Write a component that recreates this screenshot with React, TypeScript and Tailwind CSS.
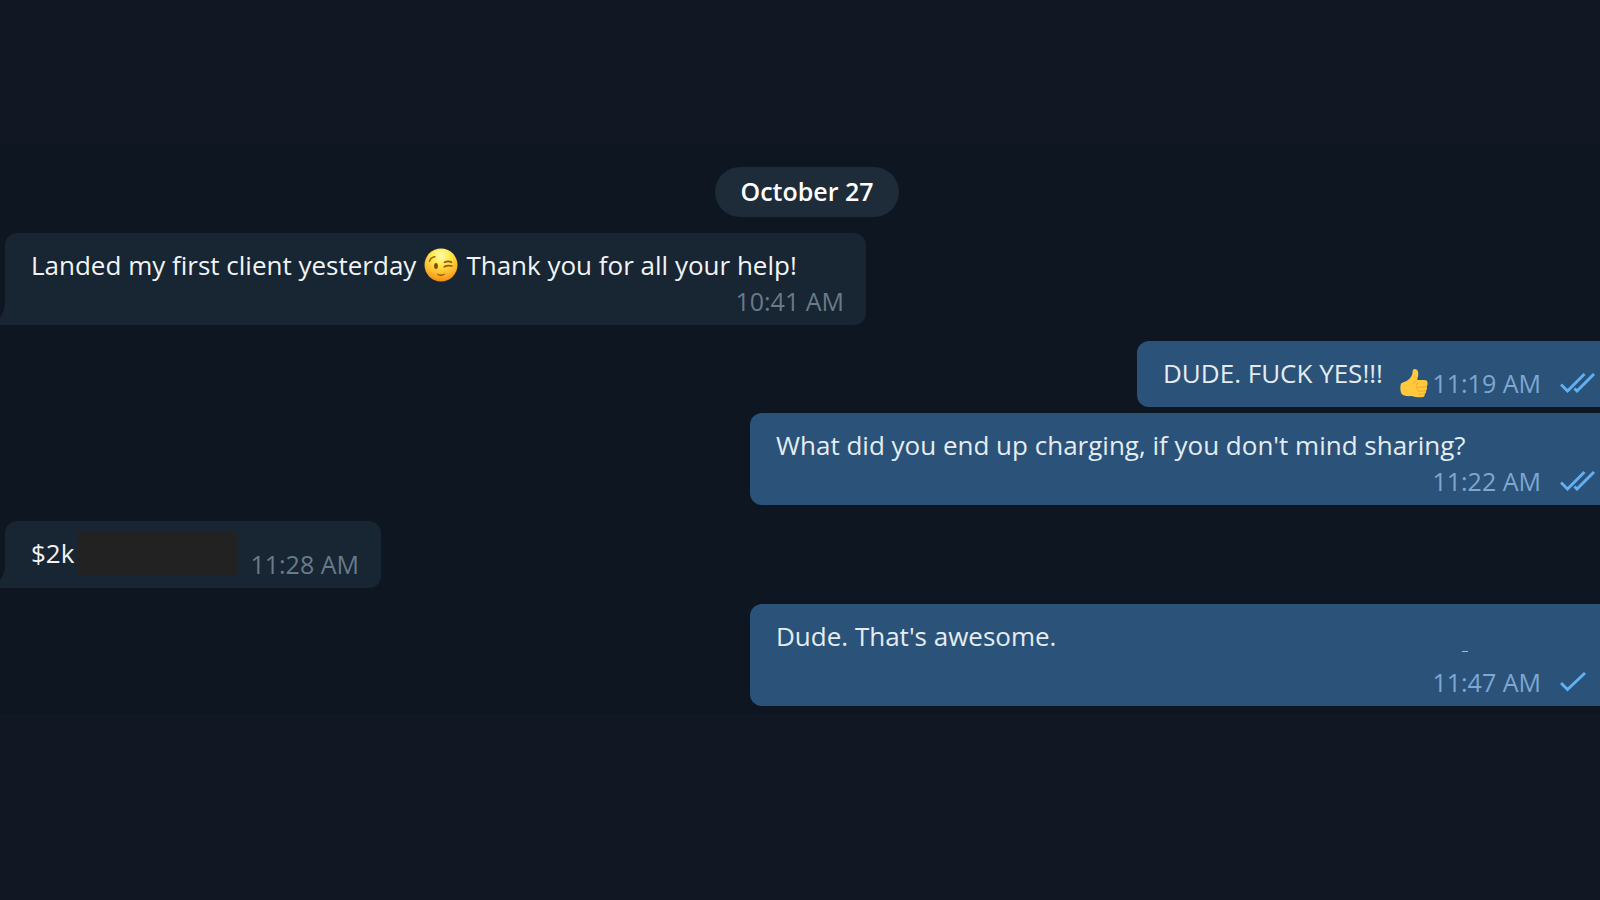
import type { ReactNode } from "react";

const WinkEmoji = () => (
  <svg
    role="img"
    aria-label="winking face"
    viewBox="0 0 34 34"
    className="mx-2 h-[34px] w-[34px] shrink-0"
  >
    <defs>
      <radialGradient id="wink-face" cx="0.5" cy="0.22" r="0.8">
        <stop offset="0" stopColor="#fffbb0" />
        <stop offset="0.35" stopColor="#ffe94a" />
        <stop offset="0.72" stopColor="#fdb62a" />
        <stop offset="1" stopColor="#f08a10" />
      </radialGradient>
    </defs>
    <circle cx="17" cy="17" r="16.5" fill="url(#wink-face)" />
    <path
      d="M5.500 13.200c.8-2.600 2.800-4.200 5.500-4.500"
      fill="none"
      stroke="#a3620f"
      strokeWidth="1.500"
      strokeLinecap="round"
    />
    <ellipse cx="12" cy="18" rx="1.900" ry="2.900" fill="#84480c" />
    <path
      d="M20.500 14.300c2.500-1.200 5-1.200 7 0M20.300 18.800c2.400-1.300 4.800-1.400 7.500-.8"
      fill="none"
      stroke="#94560d"
      strokeWidth="1.600"
      strokeLinecap="round"
    />
    <path d="M12.500 25.500c3 1.200 6 1.200 9 0-1 3.300-8 3.300-9 0z" fill="#94560d" />
  </svg>
);

const ThumbEmoji = () => (
  <svg
    role="img"
    aria-label="thumbs up"
    viewBox="0 0 28 30"
    className="mr-1 h-[30px] w-[28px] shrink-0"
  >
    <path
      d="M1 15.500C3.500 14 6 13.500 8 12c2.500-2 4.300-4.500 4.500-7.500C12.600 2.500 13 1 14.800 1c2.700.2 3.700 2.800 3.500 5.500-.1 2-.8 3.700-1.300 5.500h7c2.500 0 3.700 1.300 3.500 3 .3 1.500-.1 2.700-.8 3.500.6 1.500.3 3-.6 4 .3 1.500-.2 2.800-1.300 3.500.1 2-1 3.300-3.300 3.300-3.500.2-7-.3-10-1.300-3.500.3-7 .2-9.300-1.500C0 24 0 18.500 1 15.500z"
      fill="#ffc83d"
    />
    <path
      d="M17 12c-1.200 1-2.700 1.500-4 3.500M25.800 18.500c-2 .8-5 .9-8 .6M25.800 22.500c-2 .7-4.500.8-7.500.5M24.600 26c-1.700.5-3.500.5-5.500.2M17.500 15.500c-1.500 2.500-1 5.500.5 7.500"
      fill="none"
      stroke="#f5aa2e"
      strokeWidth="1"
      strokeLinecap="round"
    />
  </svg>
);

const Ticks = ({ read }: { read: boolean }) => (
  <svg
    role="img"
    aria-label={read ? "Read" : "Sent"}
    viewBox="0 0 36 20"
    className="h-5 w-9 shrink-0"
    fill="none"
    stroke="#62b0f4"
    strokeWidth="2.900"
  >
    {read ? (
      <>
        <path d="M1 11.500l6.500 6.500L24.500 1" />
        <path d="M14.500 15.500l2.500 2.500L34 1" />
      </>
    ) : (
      <path d="M1 11l6.500 6.500L25 1" />
    )}
  </svg>
);

const Tail = () => (
  <svg
    aria-hidden="true"
    viewBox="0 0 5 24"
    className="absolute right-full bottom-0 h-6 w-[5px]"
  >
    <path d="M5 0c0 6-1.500 12-5 16v8h5z" fill="#182533" />
  </svg>
);

const Incoming = ({ className, children }: { className: string; children: ReactNode }) => (
  <li
    className={`relative ml-[5px] max-w-full self-start rounded-xl rounded-bl-none bg-[#182533] pt-[14px] pr-[22px] pb-[6px] pl-[26px] ${className}`}
  >
    {children}
    <Tail />
  </li>
);

const Outgoing = ({ className, children }: { className: string; children: ReactNode }) => (
  <li
    className={`max-w-full self-end rounded-l-xl bg-[#2b5278] pt-[14px] pr-1 pb-[6px] pl-[26px] text-[#e4ecf2] ${className}`}
  >
    {children}
  </li>
);

const Status = ({ time, read }: { time: string; read: boolean }) => (
  <div className="flex items-center justify-end text-[25px] text-[#7da8d3]">
    <time>{time}</time>
    <span className="ml-[19px] flex">
      <Ticks read={read} />
    </span>
  </div>
);

const App = () => {
  return (
    <div className="flex min-h-screen flex-col overflow-x-hidden bg-[#111823] pt-36 font-['Open_Sans',sans-serif] text-[26px] leading-9 text-[#f1f3f5]">
      <main className="bg-[#0e1621] pt-[23px] pb-2">
        <div className="flex justify-center pl-[14px]">
          <h2 className="rounded-full bg-[#1e2c3a] px-[25px] pt-[6px] pb-2 text-[25px] font-semibold text-white">
            October 27
          </h2>
        </div>

        <ol className="mt-4 flex flex-col">
          <Incoming className="w-[861px]">
            <p className="flex items-center">
              Landed my first client yesterday
              <WinkEmoji />
              Thank you for all your help!
            </p>
            <div className="text-right text-[25px] text-[#697a89]">
              <time>10:41 AM</time>
            </div>
          </Incoming>

          <Outgoing className="mt-4 flex h-[66px] w-[463px] justify-between">
            <p>DUDE. FUCK YES!!!</p>
            <div className="flex items-center self-end">
              <ThumbEmoji />
              <Status time="11:19 AM" read />
            </div>
          </Outgoing>

          <Outgoing className="mt-1.5 w-[850px]">
            <p>What did you end up charging, if you don't mind sharing?</p>
            <Status time="11:22 AM" read />
          </Outgoing>

          <Incoming className="mt-4 flex h-[67px] w-[376px] justify-between">
            <p className="flex h-9 items-center gap-1">
              $2k
              <span className="h-11 w-[159px] bg-[#222222]" />
            </p>
            <time className="self-end text-[25px] text-[#697a89]">11:28 AM</time>
          </Incoming>

          <Outgoing className="mt-4 flex h-[102px] w-[850px] flex-col justify-between">
            <div className="flex items-end justify-between pr-32">
              <p>Dude. That's awesome.</p>
              <span className="mb-0.5 h-px w-1.5 bg-[#a9bccd]" />
            </div>
            <Status time="11:47 AM" read={false} />
          </Outgoing>
        </ol>
      </main>
    </div>
  );
};

export default App;
